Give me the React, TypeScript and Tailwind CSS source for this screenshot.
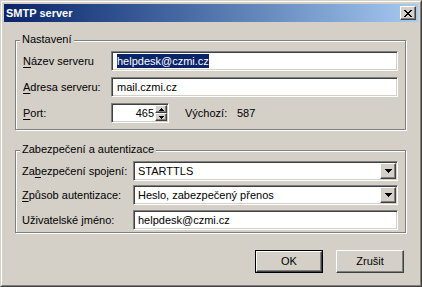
import React from "react";

const sunken =
  "border border-t-[#808080] border-l-[#808080] border-b-white border-r-white shadow-[inset_1px_1px_0_#404040,inset_-1px_-1px_0_#d4d0c8] bg-white";
const raised =
  "border border-t-white border-l-white border-b-[#404040] border-r-[#404040] shadow-[inset_-1px_-1px_0_#808080] bg-[#d4d0c8]";

const Mn = ({ children }: { children: React.ReactNode }) => (
  <span className="underline decoration-1 underline-offset-[2px]">{children}</span>
);

const Pixels = ({ rows, w, h }: { rows: string[]; w: number; h: number }) => (
  <svg width={w} height={h} viewBox={`0 0 ${w} ${h}`} shapeRendering="crispEdges">
    {rows.map((r, y) =>
      r.split("").map((c, x) => (c === "X" ? <rect key={`${x}-${y}`} x={x} y={y} width={1} height={1} fill="#000" /> : null))
    )}
  </svg>
);

const CLOSE = ["XX....XX", ".XX..XX.", "..XXXX..", "...XX...", "..XXXX..", ".XX..XX.", "XX....XX"];
const DOWN = ["XXXXXXX", ".XXXXX.", "..XXX..", "...X..."];
const SPIN_UP = ["..X..", ".XXX.", "XXXXX"];
const SPIN_DOWN = ["XXXXX", ".XXX.", "..X.."];

const GroupBox = ({ title, className, children }: { title: string; className?: string; children: React.ReactNode }) => (
  <div className={`relative border border-[#808080] shadow-[1px_1px_0_#fff,inset_1px_1px_0_#fff] ${className ?? ""}`}>
    <span className="absolute -top-[8px] left-[4px] px-[2px] bg-[#d4d0c8] leading-[13px]">{title}</span>
    {children}
  </div>
);

const Combo = ({ value }: { value: string }) => (
  <div className={`${sunken} flex-1 h-[20px] flex items-center pl-[4px]`}>
    <span className="flex-1">{value}</span>
    <div className={`${raised} w-[16px] h-[16px] mr-[1px] flex items-center justify-center`}>
      <Pixels rows={DOWN} w={7} h={4} />
    </div>
  </div>
);

export default function App() {
  return (
    <div className="w-[422px] h-[287px] bg-[#d4d0c8] text-[11px] leading-[13px] text-black font-['Liberation_Sans',Arial,sans-serif] select-none">
      <div className="w-full h-full border border-t-[#d4d0c8] border-l-[#d4d0c8] border-b-[#404040] border-r-[#404040]">
        <div className="w-full h-full border border-t-white border-l-white border-b-[#808080] border-r-[#808080] p-[2px] flex flex-col">
          {/* title bar */}
          <div className="h-[18px] flex items-center bg-linear-to-r from-[#0a246a] to-[#a6caf0] pl-[2px] pr-[2px]">
            <span className="flex-1 text-white font-bold">SMTP server</span>
            <div className={`${raised} w-[16px] h-[14px] flex items-center justify-center`}>
              <Pixels rows={CLOSE} w={8} h={7} />
            </div>
          </div>

          {/* client */}
          <div className="flex flex-col pl-[11px] pr-[12px]">
            <GroupBox title="Nastavení" className="mt-[18px]">
              <div className="flex flex-col gap-[6px] pt-[10px] pb-[6px] pl-[7px] pr-[7px]">
                <div className="flex items-center h-[20px]">
                  <span className="w-[88px]">
                    <Mn>N</Mn>ázev serveru
                  </span>
                  <div className={`${sunken} flex-1 h-[20px] flex items-center pl-[5px]`}>
                    <span className="bg-[#0a246a] text-white leading-[14px]">helpdesk@czmi.cz</span>
                  </div>
                </div>
                <div className="flex items-center h-[20px]">
                  <span className="w-[88px]">
                    <Mn>A</Mn>dresa serveru:
                  </span>
                  <div className={`${sunken} flex-1 h-[20px] flex items-center pl-[5px]`}>mail.czmi.cz</div>
                </div>
                <div className="flex items-center h-[20px]">
                  <span className="w-[88px]">
                    <Mn>P</Mn>ort:
                  </span>
                  <div className={`${sunken} w-[58px] h-[20px] flex items-center justify-end`}>
                    <span className="mr-[1px]">465</span>
                    <div className="flex flex-col w-[12px] h-[16px] mr-[1px]">
                      <div className={`${raised} h-[8px] flex items-center justify-center`}>
                        <Pixels rows={SPIN_UP} w={5} h={3} />
                      </div>
                      <div className={`${raised} h-[8px] flex items-center justify-center`}>
                        <Pixels rows={SPIN_DOWN} w={5} h={3} />
                      </div>
                    </div>
                  </div>
                  <span className="ml-[16px] w-[52px]">Výchozí:</span>
                  <span>587</span>
                </div>
              </div>
            </GroupBox>

            <GroupBox title="Zabezpečení a autentizace" className="mt-[20px]">
              <div className="flex flex-col pt-[10px] pb-[2px] pl-[6px] pr-[7px]">
                <div className="flex items-center h-[20px]">
                  <span className="w-[111px]">
                    Za<Mn>b</Mn>ezpečení spojení:
                  </span>
                  <Combo value="STARTTLS" />
                </div>
                <div className="flex items-center h-[20px] mt-[4px]">
                  <span className="w-[111px]">
                    <Mn>Z</Mn>působ autentizace:
                  </span>
                  <Combo value="Heslo, zabezpečený přenos" />
                </div>
                <div className="flex items-center h-[20px] mt-[5px]">
                  <span className="w-[111px]">
                    Uživatelské <Mn>j</Mn>méno:
                  </span>
                  <div className={`${sunken} flex-1 h-[20px] flex items-center pl-[4px]`}>helpdesk@czmi.cz</div>
                </div>
              </div>
            </GroupBox>

            <div className="flex justify-end gap-[13px] mt-[17px] mr-[2px]">
              <div className="w-[68px] h-[23px] border border-black">
                <div className={`${raised} w-full h-full flex items-center justify-center`}>OK</div>
              </div>
              <div className={`${raised} w-[68px] h-[23px] flex items-center justify-center`}>Zrušit</div>
            </div>
          </div>
        </div>
      </div>
    </div>
  );
}
